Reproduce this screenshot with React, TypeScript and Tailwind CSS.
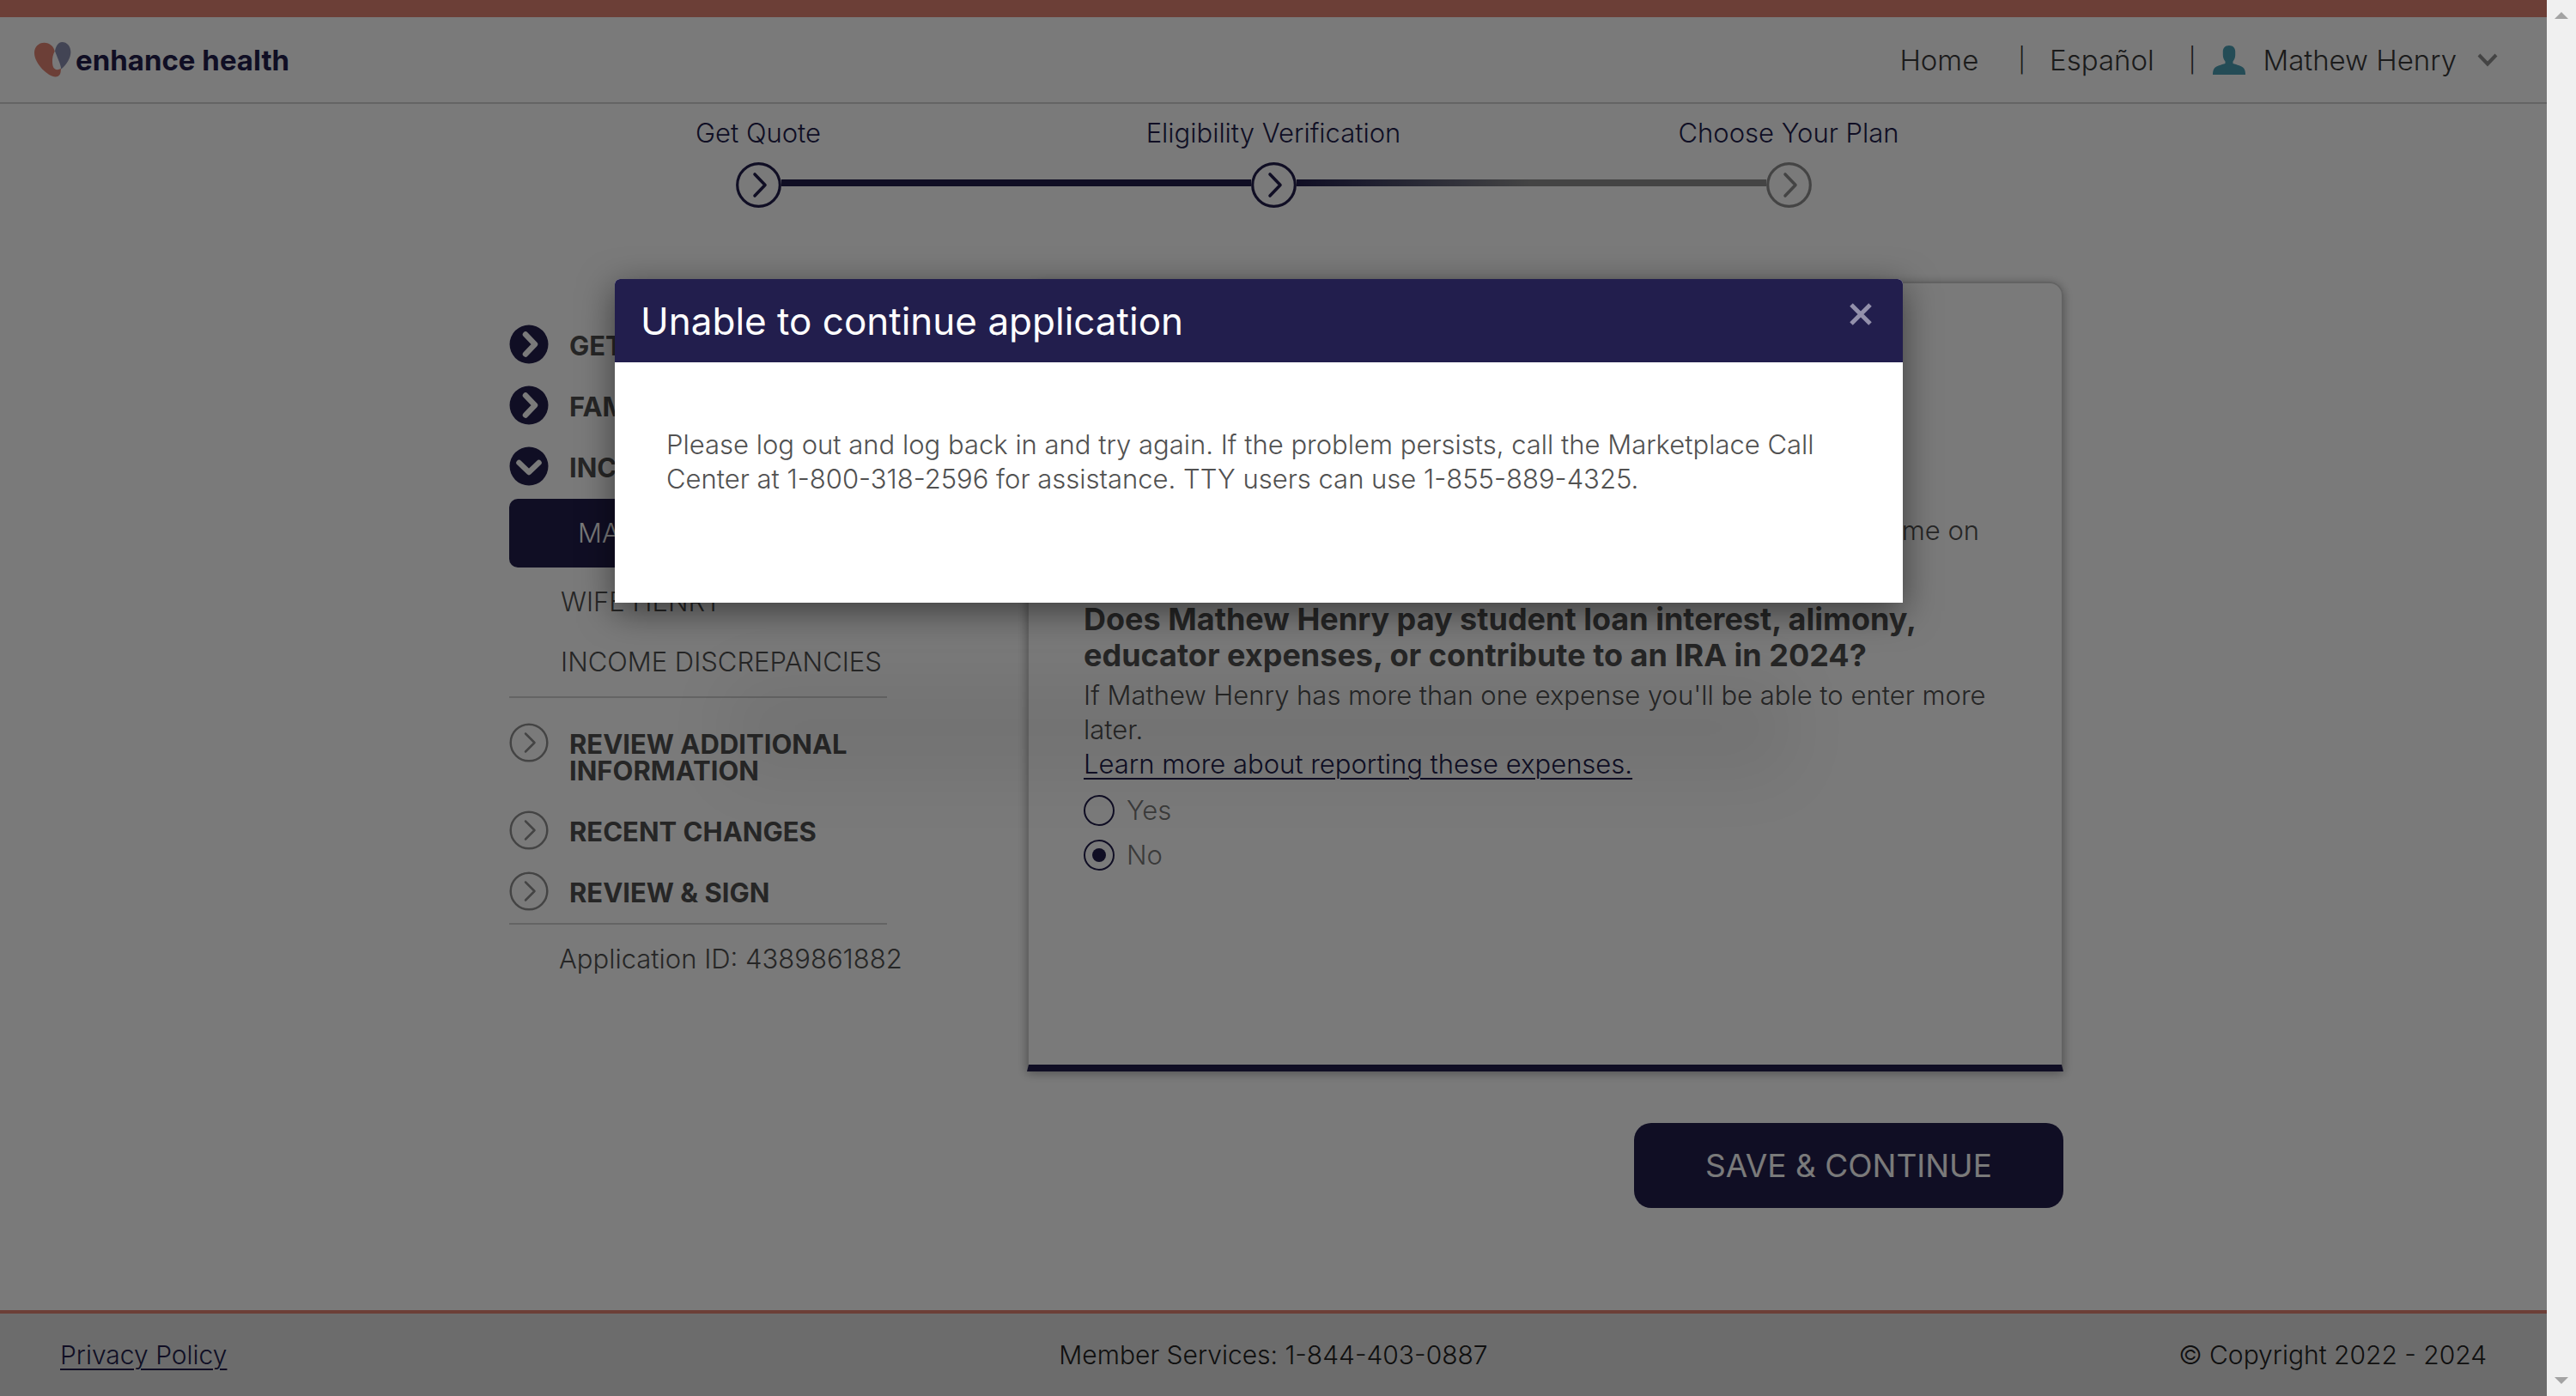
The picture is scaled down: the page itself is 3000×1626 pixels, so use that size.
import type { ReactNode } from "react";

function Logo() {
  return (
    <a href="#home" className="flex items-center text-[33px] leading-[40px] font-bold text-[#221e4d]">
      <svg width="43" height="42" viewBox="0 0 43 42" aria-hidden="true">
        <path
          d="M0 12.5C0 5.500 5 .7 11.500 .7C18 .7 22.600 5 23.700 10.800C21.600 14.500 20.800 19 21 23.600C21.200 29 23 32.300 26.600 32.300C28.400 32.300 29.800 31.600 30.800 30.600C31.200 36.500 29.600 40.500 24.500 40.500C16.500 40.500 0 25.500 0 12.500Z"
          fill="#e18573"
        />
        <path d="M24 10.500C25.200 4.500 28 0 32.300 0C38 0 42.400 4.800 42.400 11.800C42.400 18.500 37.500 26.500 31.300 31.500C30.400 24.500 26 16.500 24 10.500Z" fill="#8b8fb0" />
      </svg>
      <span className="ml-[5px]">enhance health</span>
    </a>
  );
}

function Header() {
  return (
    <header className="border-t-[20px] border-b-2 border-t-[#e18573] border-b-[#d2d2d2]">
      <div className="flex h-[99px] items-center justify-between pr-[57px] pl-[40px]">
        <Logo />
        <nav className="flex items-center text-[33px] leading-[40px] font-light text-[#3a3a3a]">
          <a href="#home">Home</a>
          <span className="mr-[28px] ml-[46px] text-[28px]">|</span>
          <a href="#es">Español</a>
          <span className="mr-[20px] ml-[40px] text-[28px]">|</span>
          <button type="button" className="flex items-center">
            <svg width="38" height="34" viewBox="0 0 38 34" aria-hidden="true">
              <path
                d="M19 0C14.500 0 11.800 2.800 11.800 7V11C11.800 14 13 16.500 14.500 18.500V21C10 22.500 4 23.500 1.500 27C.4 28.800 0 31 0 34H38C38 31 37.600 28.800 36.500 27C34 23.500 28 22.500 23.500 21V18.500C25 16.500 26.200 14 26.200 11V7C26.200 2.800 23.500 0 19 0Z"
                fill="#4b9fb5"
              />
            </svg>
            <span className="ml-[20px]">Mathew Henry</span>
            <svg className="ml-[24px]" width="24" height="16" viewBox="0 0 24 16" fill="none" stroke="#8f8f8f" strokeWidth="4" aria-hidden="true">
              <path d="M2 2L12 12.500L22 2" />
            </svg>
          </button>
        </nav>
      </div>
    </header>
  );
}

function StepCircle({ color }: { color: string }) {
  return (
    <svg width="53" height="53" viewBox="0 0 53 53" fill="none" stroke={color} aria-hidden="true">
      <circle cx="26.500" cy="26.500" r="24.800" strokeWidth="3.200" />
      <path d="M22 14L34 26.500L22 39" strokeWidth="3.600" strokeLinecap="round" strokeLinejoin="round" />
    </svg>
  );
}

const steps = [
  { label: "Get Quote", color: "#221e4d", before: "bg-transparent", after: "bg-[#221e4d]" },
  { label: "Eligibility Verification", color: "#221e4d", before: "bg-[#221e4d]", after: "bg-linear-to-r from-[#221e4d] to-[#8f8f8f]" },
  { label: "Choose Your Plan", color: "#8f8f8f", before: "bg-[#8f8f8f]", after: "bg-transparent" },
];

function Stepper() {
  return (
    <ol className="mx-auto grid w-full max-w-[1800px] grid-cols-3 pt-[14px]">
      {steps.map((s) => (
        <li key={s.label} className="flex flex-col text-center text-[31px] leading-[40px] font-light text-[#221e4d]">
          {s.label}
          <span className="mt-[14px] flex items-center">
            <span className={`mb-[6px] h-[8px] flex-1 ${s.before}`} />
            <StepCircle color={s.color} />
            <span className={`mb-[6px] h-[8px] flex-1 ${s.after}`} />
          </span>
        </li>
      ))}
    </ol>
  );
}

function SolidCircle({ open }: { open?: boolean }) {
  return (
    <svg className="shrink-0" width="46" height="46" viewBox="0 0 46 46" aria-hidden="true">
      <circle cx="23" cy="23" r="22.500" fill="#221e4d" />
      <path
        d={open ? "M11.500 19L23 30L34.500 19" : "M19 11.500L30 23L19 34.500"}
        fill="none"
        stroke="#fff"
        strokeWidth="6.500"
        strokeLinecap="round"
        strokeLinejoin="round"
      />
    </svg>
  );
}

function OutlineCircle() {
  return (
    <svg className="shrink-0" width="46" height="46" viewBox="0 0 46 46" fill="none" stroke="#8f8f8f" strokeWidth="2.500" aria-hidden="true">
      <circle cx="23" cy="23" r="21.300" />
      <path d="M19 12.500L29.500 23L19 33.500" strokeLinecap="round" strokeLinejoin="round" />
    </svg>
  );
}

function Section({ icon, children }: { icon: ReactNode; children: ReactNode }) {
  return (
    <a href="#section" className="flex items-start gap-[24px] pb-[25px] text-[31px] leading-[31px] font-bold text-[#515151]">
      {icon}
      <span className="pt-[9px]">{children}</span>
    </a>
  );
}

function Sidebar() {
  return (
    <nav className="w-[440px] shrink-0 pt-[50px] text-[31px] leading-[40px] font-light text-[#515151]">
      <Section icon={<SolidCircle />}>GET STARTED</Section>
      <Section icon={<SolidCircle />}>FAMILY</Section>
      <Section icon={<SolidCircle open />}>INCOME</Section>
      <a href="#mathew" className="-mt-[10px] flex h-[80px] items-center rounded-[10px] bg-[#221e4d] pl-[80px] text-white">
        MATHEW HENRY
      </a>
      <a href="#wife" className="block pt-[20px] pl-[60px]">WIFE HENRY</a>
      <a href="#discrepancies" className="block pt-[30px] pb-[20px] pl-[60px] whitespace-nowrap">INCOME DISCREPANCIES</a>
      <div className="border-y-2 border-[#d2d2d2] pt-[29px]">
        <Section icon={<OutlineCircle />}>REVIEW ADDITIONAL INFORMATION</Section>
        <div className="pt-[6px]">
          <Section icon={<OutlineCircle />}>RECENT CHANGES</Section>
          <div className="-mb-[11px]">
            <Section icon={<OutlineCircle />}>REVIEW &amp; SIGN</Section>
          </div>
        </div>
      </div>
      <p className="pt-[20px] pl-[58px] whitespace-nowrap">Application ID: 4389861882</p>
    </nav>
  );
}

function Radio({ label, checked }: { label: string; checked?: boolean }) {
  return (
    <label className="mb-[16px] flex h-[36px] items-center gap-[14px] text-[#7a7a7a]">
      <input
        type="radio"
        name="expenses"
        defaultChecked={checked}
        className="size-[36px] appearance-none rounded-full border-2 border-[#221e4d] bg-clip-content p-[8px] checked:bg-[#221e4d]"
      />
      {label}
    </label>
  );
}

function QuestionCard() {
  return (
    <section className="h-[920px] rounded-t-[16px] border-2 border-b-[8px] border-[#cfcfcf] border-b-[#221e4d] px-[64px] pt-[268px] text-[31px] leading-[40px] font-light text-[#515151] shadow-[0_2px_12px_rgba(0,0,0,0.35)]">
      <p className="pr-[32px] text-right">Mathew Henry reports income on</p>
      <h2 className="mt-[62px] text-[36px] leading-[42px] font-bold">
        Does Mathew Henry pay student loan interest, alimony,
        <br />
        educator expenses, or contribute to an IRA in 2024?
      </h2>
      <p className="mt-[6px]">
        If Mathew Henry has more than one expense you'll be able to enter more
        <br />
        later.
      </p>
      <a href="#learn" className="text-[#221e4d] underline decoration-2 underline-offset-[5px]">
        Learn more about reporting these expenses.
      </a>
      <div className="mt-[16px]">
        <Radio label="Yes" />
        <Radio label="No" checked />
      </div>
    </section>
  );
}

function Modal() {
  return (
    <div className="absolute inset-0 flex items-start justify-center bg-black/52 pt-[325px] pr-[34px]">
      <div
        role="dialog"
        aria-labelledby="dialog-title"
        className="w-full max-w-[1500px] rounded-t-[6px] bg-white shadow-[0_10px_40px_rgba(0,0,0,0.5),0_334px_80px_-130px_rgba(0,0,0,0.06)]"
      >
        <div className="flex h-[97px] items-start justify-between rounded-t-[6px] bg-[#221e4d] pr-[35px] pl-[30px]">
          <h1 id="dialog-title" className="pt-[24px] text-[44px] leading-[50px] text-white">Unable to continue application</h1>
          <button type="button" aria-label="Close" className="mt-[27px]">
            <svg width="28" height="28" viewBox="0 0 28 28" fill="none" stroke="#9390ab" strokeWidth="5" aria-hidden="true">
              <path d="M3 3L25 25M25 3L3 25" />
            </svg>
          </button>
        </div>
        <p className="h-[280px] px-[60px] pt-[76px] text-[31px] leading-[40px] font-light text-[#515151]">
          Please log out and log back in and try again. If the problem persists, call the Marketplace Call Center at 1-800-318-2596 for assistance. TTY users can use 1-855-889-4325.
        </p>
      </div>
    </div>
  );
}

export default function App() {
  return (
    <div className="flex min-h-screen font-['Inter',sans-serif]">
      <div className="relative flex flex-1 flex-col bg-white">
        <Header />
        <Stepper />
        <main className="mx-auto flex w-full max-w-[1840px] items-start gap-[163px] pt-[86px] pl-[30px]">
          <Sidebar />
          <div className="min-w-0 flex-1">
            <QuestionCard />
            <button type="button" className="mt-[60px] ml-auto block h-[99px] w-[500px] rounded-[20px] bg-[#221e4d] text-[37px] text-white">
              SAVE &amp; CONTINUE
            </button>
          </div>
        </main>
        <footer className="mt-auto grid h-[100px] grid-cols-3 items-center border-t-4 border-[#e18573] bg-[#e1e1e1] px-[70px] text-[30px] leading-[40px] font-light text-[#222]">
          <a href="#privacy" className="justify-self-start text-[#221e4d] underline decoration-2 underline-offset-[5px]">Privacy Policy</a>
          <p className="text-center">Member Services: 1-844-403-0887</p>
          <p className="text-right">© Copyright 2022 - 2024</p>
        </footer>
        <Modal />
      </div>
      <div aria-hidden="true" className="flex w-[34px] flex-col items-center justify-between bg-[#f0f0f0] py-[14px]">
        <svg width="16" height="8" viewBox="0 0 16 8"><path d="M8 0L16 8H0Z" fill="#a3a3a3" /></svg>
        <svg width="16" height="8" viewBox="0 0 16 8"><path d="M0 0H16L8 8Z" fill="#a3a3a3" /></svg>
      </div>
    </div>
  );
}
